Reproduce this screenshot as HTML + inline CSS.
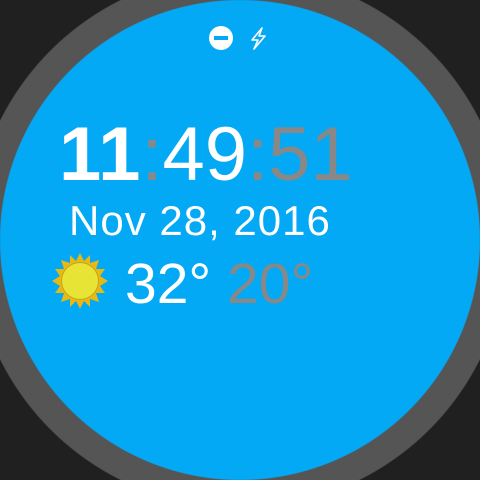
<!DOCTYPE html>
<html><head><style>
html,body{margin:0;padding:0;width:480px;height:480px;overflow:hidden;font-family:"Liberation Sans",sans-serif}
body{background:radial-gradient(circle at 240px 240px,#03A9F4 0,#03A9F4 239.5px,#555 240.5px,#555 267.5px,#202020 268.5px)}
.t{position:absolute;white-space:nowrap;line-height:1}
.g{color:#888}
</style></head><body>
<svg style="position:absolute;left:0;top:0" width="480" height="480">
<circle cx="221" cy="38" r="12" fill="#fff"/><rect x="214" y="36" width="14" height="4" fill="#03A9F4"/>
<path d="M262 28 L252 40 L258 40 L254 49 L265 36 L259 36 Z" fill="none" stroke="#fff" stroke-width="1.6" stroke-linejoin="round"/>
<g transform="translate(80,281)">
<polygon fill="#E8B816" points="0,-28 4,-20 10,-26 10,-18 19,-21 16,-12 25,-12 20,-5 28,0 20,5 25,12 16,12 19,21 10,18 10,26 4,20 0,28 -4,20 -10,26 -10,18 -19,21 -16,12 -25,12 -20,5 -28,0 -20,-5 -25,-12 -16,-12 -19,-21 -10,-18 -10,-26 -4,-20"/>
<circle r="19" fill="#C9A414"/><circle r="18" fill="#E8E435"/>
</g>
</svg>
<div class="t" style="left:59px;top:117px;font-size:76px;color:#fff"><b style="letter-spacing:1px">11</b><span class="g">:</span>49<span class="g">:51</span></div>
<div class="t" style="left:69px;top:200px;font-size:42px;letter-spacing:1px;color:#fff">Nov 28, 2016</div>
<div class="t" style="left:125px;top:256px;font-size:57px;color:#fff">32° <span class="g">20°</span></div>
</body></html>
